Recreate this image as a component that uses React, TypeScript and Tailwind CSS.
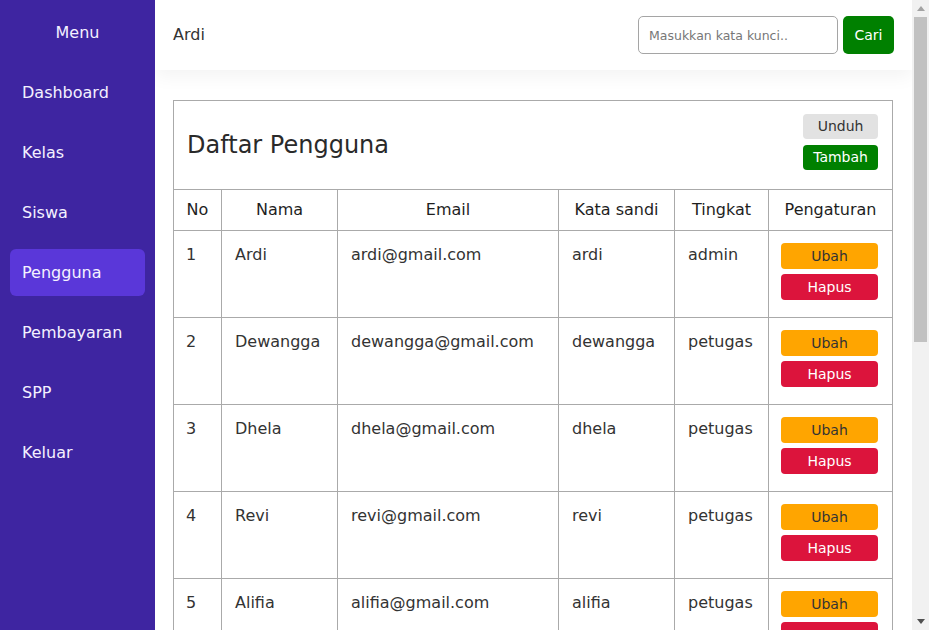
import React from "react";

const menu = ["Dashboard", "Kelas", "Siswa", "Pengguna", "Pembayaran", "SPP", "Keluar"];

const rows = [
  { no: 1, nama: "Ardi", email: "ardi@gmail.com", sandi: "ardi", tingkat: "admin" },
  { no: 2, nama: "Dewangga", email: "dewangga@gmail.com", sandi: "dewangga", tingkat: "petugas" },
  { no: 3, nama: "Dhela", email: "dhela@gmail.com", sandi: "dhela", tingkat: "petugas" },
  { no: 4, nama: "Revi", email: "revi@gmail.com", sandi: "revi", tingkat: "petugas" },
  { no: 5, nama: "Alifia", email: "alifia@gmail.com", sandi: "alifia", tingkat: "petugas" },
];

const headers = ["No", "Nama", "Email", "Kata sandi", "Tingkat", "Pengaturan"];

function Scrollbar() {
  return (
    <div className="flex h-screen w-[17px] shrink-0 flex-col bg-[#f1f1f1]">
      <div className="flex h-[17px] items-center justify-center">
        <svg width="8" height="5" viewBox="0 0 8 5">
          <path d="M4 0 L8 5 L0 5 Z" fill="#a3a3a3" />
        </svg>
      </div>
      <div className="flex-1 px-[2px]">
        <div className="h-[325px] bg-[#c1c1c1]" />
      </div>
      <div className="flex h-[17px] items-center justify-center">
        <svg width="8" height="5" viewBox="0 0 8 5">
          <path d="M0 0 L8 0 L4 5 Z" fill="#505050" />
        </svg>
      </div>
    </div>
  );
}

export default function App() {
  return (
    <div
      className="flex h-screen overflow-hidden bg-white text-[#333]"
      style={{ fontFamily: '"DejaVu Sans", "Noto Sans", sans-serif' }}
    >
      <aside className="h-screen w-[155px] shrink-0 bg-[#3e25a1] px-[10px] text-[#f4f1ff]">
        <div className="flex h-[65px] items-center justify-center text-[16px]">Menu</div>
        <nav className="mt-[4px] flex flex-col gap-[13px]">
          {menu.map((m) => (
            <div
              key={m}
              className={
                "flex h-[47px] items-center rounded-[6px] px-[12px] text-[16px] " +
                (m === "Pengguna" ? "bg-[#5a37d9]" : "")
              }
            >
              {m}
            </div>
          ))}
        </nav>
      </aside>

      <main className="h-screen min-w-0 flex-1 overflow-hidden">
        <header className="flex h-[70px] items-center justify-between bg-white pl-[18px] pr-[18px] shadow-[0_6px_18px_rgba(0,0,0,0.05)]">
          <div className="text-[16px] text-[#333]">Ardi</div>
          <div className="flex items-center gap-[5px]">
            <input
              className="h-[38px] w-[200px] rounded-[5px] border border-[#a5a5a5] px-[10px] text-[12.5px] text-[#333] outline-none placeholder:text-[#777]"
              placeholder="Masukkan kata kunci.."
            />
            <button className="h-[38px] w-[51px] rounded-[5px] bg-[#008000] text-[14px] text-white">
              Cari
            </button>
          </div>
        </header>

        <div className="pb-[24px] pl-[18px] pt-[30px]">
          <table className="w-[719px] table-fixed border-collapse border border-[#aaa]">
            <colgroup>
              <col className="w-[48px]" />
              <col className="w-[116px]" />
              <col className="w-[221px]" />
              <col className="w-[116px]" />
              <col className="w-[94px]" />
              <col className="w-[124px]" />
            </colgroup>
            <thead>
              <tr>
                <td colSpan={6} className="border border-[#aaa] p-0">
                  <div className="flex h-[88px] items-start justify-between pl-[13px] pr-[14px]">
                    <h1 className="self-center text-[24px] font-medium text-[#2a2a2a]">Daftar Pengguna</h1>
                    <div className="flex flex-col gap-[6px] pt-[13px]">
                      <button className="h-[25px] w-[75px] rounded-[4px] bg-[#e2e2e2] text-[14px] text-[#333]">
                        Unduh
                      </button>
                      <button className="h-[25px] w-[75px] rounded-[4px] bg-[#008000] text-[14px] text-white">
                        Tambah
                      </button>
                    </div>
                  </div>
                </td>
              </tr>
              <tr>
                {headers.map((h) => (
                  <th
                    key={h}
                    className="h-[41px] border border-[#aaa] p-0 text-center text-[16px] font-medium text-[#1e1e1e]"
                  >
                    {h}
                  </th>
                ))}
              </tr>
            </thead>
            <tbody>
              {rows.map((r) => (
                <tr key={r.no}>
                  <td className="h-[87px] border border-[#aaa] px-[12px] pt-[12px] align-top text-[16px] leading-[24px]">
                    {r.no}
                  </td>
                  <td className="border border-[#aaa] px-[13px] pt-[12px] align-top text-[16px] leading-[24px]">
                    {r.nama}
                  </td>
                  <td className="border border-[#aaa] px-[13px] pt-[12px] align-top text-[16px] leading-[24px]">
                    {r.email}
                  </td>
                  <td className="border border-[#aaa] px-[13px] pt-[12px] align-top text-[16px] leading-[24px]">
                    {r.sandi}
                  </td>
                  <td className="border border-[#aaa] px-[13px] pt-[12px] align-top text-[16px] leading-[24px]">
                    {r.tingkat}
                  </td>
                  <td className="border border-[#aaa] px-[12px] pt-[12px] align-top">
                    <div className="flex flex-col gap-[5px]">
                      <button className="h-[26px] w-[97px] rounded-[4px] bg-[#ffa500] text-[14px] text-[#333]">
                        Ubah
                      </button>
                      <button className="h-[26px] w-[97px] rounded-[4px] bg-[#dc143c] text-[14px] text-white">
                        Hapus
                      </button>
                    </div>
                  </td>
                </tr>
              ))}
            </tbody>
          </table>
        </div>
      </main>

      <Scrollbar />
    </div>
  );
}
